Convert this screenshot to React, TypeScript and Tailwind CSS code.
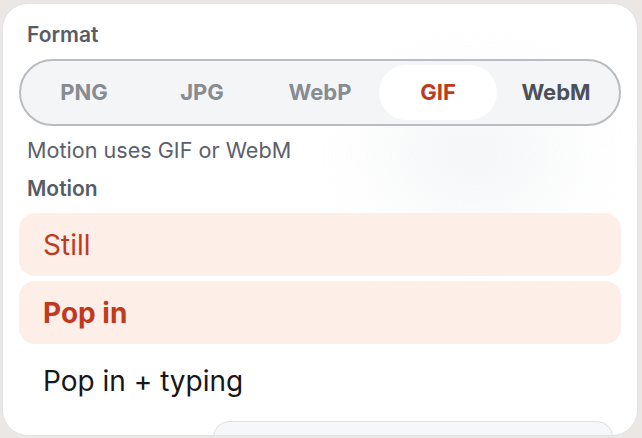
import React from "react"

const formats = ["PNG", "JPG", "WebP", "GIF", "WebM"]
const motions = [
  { label: "Still", state: "hover" },
  { label: "Pop in", state: "selected" },
  { label: "Pop in + typing", state: "idle" },
]

export default function App() {
  const activeFormat = "GIF"

  return (
    <div className="w-[642px] h-[438px] bg-[#ebe7e4] pt-[3px] pl-[2px] font-['Inter',sans-serif]">
      <div className="relative w-[636px] h-[433px] overflow-hidden rounded-[26px] border border-[#e2e3e6] bg-white px-4 pt-[17px]">
        {/* soft glow behind the control */}
        <div className="pointer-events-none absolute left-[380px] top-[90px] h-[120px] w-[180px] rounded-full bg-[#eef0f2] opacity-60 blur-2xl" />

        <div className="relative">
          <div className="px-2 text-[21px] leading-[28px] font-semibold text-[#585c67]">Format</div>

          <div className="mt-[10px] grid h-[67px] grid-cols-5 rounded-full border-2 border-[#b9bcc1] bg-[#f3f5f7] p-1">
            {formats.map((f) => (
              <div
                key={f}
                className={
                  f === activeFormat
                    ? "flex items-center justify-center rounded-full bg-white text-[22px] font-bold text-[#bf3a1e]"
                    : f === "WebM"
                    ? "flex items-center justify-center text-[22px] font-bold text-[#4c505b]"
                    : "flex items-center justify-center text-[22px] font-bold text-[#878b92]"
                }
              >
                {f}
              </div>
            ))}
          </div>

          <p className="mt-[10px] px-2 text-[21.6px] leading-[28px] text-[#5c606a]">Motion uses GIF or WebM</p>

          <div className="mt-[11px] px-2 text-[21px] leading-[28px] font-semibold text-[#585c67]">Motion</div>

          <div className="mt-[10px] flex flex-col gap-[5px]">
            {motions.map((m) => (
              <div
                key={m.label}
                className={
                  m.state === "idle"
                    ? "flex h-[63px] items-center rounded-2xl px-6 text-[28px] text-[#16171a]"
                    : m.state === "selected"
                    ? "flex h-[63px] items-center rounded-2xl bg-[#fdeee8] px-6 text-[28px] font-bold text-[#bf3a1e]"
                    : "flex h-[63px] items-center rounded-2xl bg-[#fdeee8] px-6 text-[28px] text-[#bf3a1e]"
                }
              >
                {m.label}
              </div>
            ))}
          </div>

          <div className="mt-[9px] ml-[194px] h-[40px] w-[400px] rounded-t-2xl border border-[#dcdfe3] bg-[#f6f7f9]" />
        </div>
      </div>
    </div>
  )
}
